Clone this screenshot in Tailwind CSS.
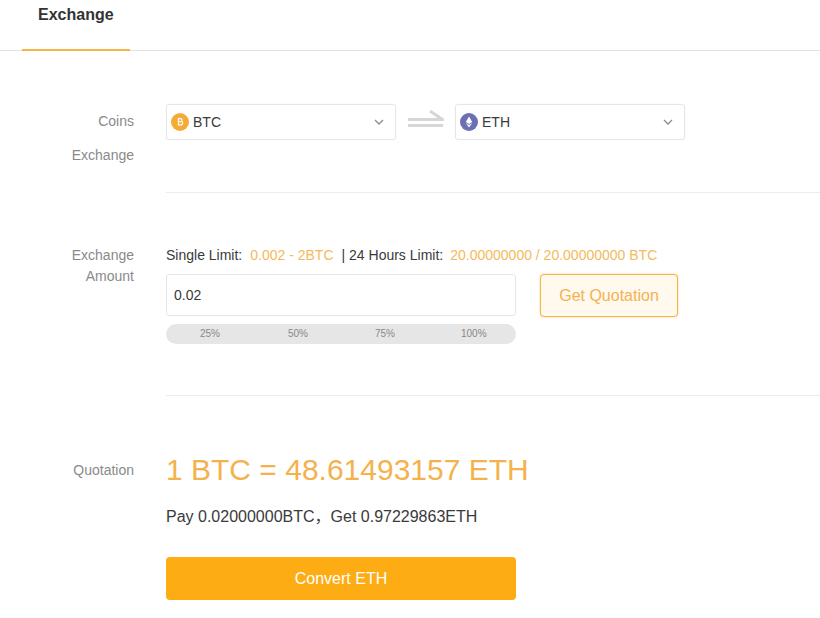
<!DOCTYPE html>
<html lang="en">
  <head>
    <meta charset="utf-8" />
    <meta name="viewport" content="width=device-width, initial-scale=1.0" />
    <title>Exchange</title>
    <script src="https://cdn.jsdelivr.net/npm/@tailwindcss/browser@4"></script>
  </head>
  <body class="w-[820px] h-[618px] overflow-hidden bg-white font-['Liberation_Sans','Noto_Sans_CJK_SC',Arial,sans-serif] text-[14px] text-[#3a3a3a]">
    <!-- tabs -->
    <div class="h-[51px] border-b border-[#e2e2e2] pl-[22px]">
      <div class="w-[108px] h-[51px] border-b-2 border-[#f5b544] pl-4 pt-[5px] text-[16px] leading-5 font-bold text-[#333]">Exchange</div>
    </div>

    <!-- coins -->
    <div class="flex pt-[53px]">
      <div class="w-[134px] shrink-0 text-right text-[#8a8a8a] leading-[34px]">
        <div>Coins</div>
        <div>Exchange</div>
      </div>
      <div class="ml-8 flex-1 h-[89px] border-b border-[#ececec]">
        <div class="flex items-center">
          <div class="w-[230px] h-9 flex items-center pl-[4px] pr-[10px] border border-[#e6e6e6] rounded-[3px] shadow-[0_0_2px_rgba(0,0,0,0.05)]">
            <svg class="w-[18px] h-[18px] shrink-0" viewBox="0 0 18 18">
              <circle cx="9" cy="9" r="9" fill="#f5ac37" />
              <path d="M7.400 5.600h2.200a1.500 1.500 0 0 1 .6 2.900 1.700 1.700 0 0 1-.4 3.400H7.400zM7.400 8.600h2.400" fill="none" stroke="#fff" stroke-width="1.100" />
            </svg>
            <span class="ml-[4px] flex-1">BTC</span>
            <svg class="w-[10px] h-[6px] mr-[1px]" viewBox="0 0 10 6"><path d="M1 1l4 4 4-4" fill="none" stroke="#8c8c8c" stroke-width="1.300" /></svg>
          </div>
          <svg class="w-[36px] h-[24px] ml-[12px] mr-[11px] shrink-0" viewBox="0 0 36 24">
            <path d="M0 9.500h34.500L22 1" fill="none" stroke="#d6d6d6" stroke-width="3" />
            <path d="M0 15.500h35" fill="none" stroke="#d6d6d6" stroke-width="3" />
          </svg>
          <div class="w-[230px] h-9 flex items-center pl-[4px] pr-[10px] border border-[#e6e6e6] rounded-[3px] shadow-[0_0_2px_rgba(0,0,0,0.05)]">
            <svg class="w-[18px] h-[18px] shrink-0" viewBox="0 0 18 18">
              <circle cx="9" cy="9" r="9" fill="#6b70b5" />
              <path d="M9 3.500L5.800 9 9 11l3.200-2zM5.800 10L9 14.500 12.200 10 9 12z" fill="#fff" />
            </svg>
            <span class="ml-[4px] flex-1">ETH</span>
            <svg class="w-[10px] h-[6px] mr-[1px]" viewBox="0 0 10 6"><path d="M1 1l4 4 4-4" fill="none" stroke="#8c8c8c" stroke-width="1.300" /></svg>
          </div>
        </div>
      </div>
    </div>

    <!-- amount -->
    <div class="flex pt-[52px]">
      <div class="w-[134px] shrink-0 text-right text-[#8a8a8a] leading-[21px]">
        <div>Exchange</div>
        <div>Amount</div>
      </div>
      <div class="ml-8 flex-1 h-[151px] border-b border-[#ececec]">
        <div class="leading-[21px] whitespace-nowrap">
          Single Limit:<span class="ml-2 text-[#f5b95c]">0.002 - 2BTC</span><span class="ml-2">| 24 Hours Limit:</span><span class="ml-[7px] text-[#f5b95c]">20.00000000 / 20.00000000 BTC</span>
        </div>
        <div class="flex mt-[8px]">
          <div class="w-[350px] h-[42px] pl-[7px] leading-[40px] border border-[#e6e6e6] rounded-[3px]">0.02</div>
          <button class="w-[138px] h-[43px] ml-6 text-[16px] text-[#f3b252] bg-[#fff9ee] border border-[#f5b544] rounded-[4px] shadow-[0_0_2px_rgba(245,181,68,0.7)]">Get Quotation</button>
        </div>
        <div class="relative w-[350px] h-5 mt-[7px] bg-[#e6e6e6] rounded-full text-[10px] leading-5 text-[#888]">
          <span class="absolute left-[34px]">25%</span>
          <span class="absolute left-[122px]">50%</span>
          <span class="absolute left-[209px]">75%</span>
          <span class="absolute left-[295px]">100%</span>
        </div>
      </div>
    </div>

    <!-- quotation -->
    <div class="flex pt-[56px]">
      <div class="w-[134px] shrink-0 text-right text-[#8a8a8a] pt-[8px] leading-5">Quotation</div>
      <div class="ml-8 flex-1">
        <div class="text-[30px] leading-9 text-[#f5b24c]">1 BTC = 48.61493157 ETH</div>
        <div class="mt-[17px] text-[16px] leading-6">Pay 0.02000000BTC，Get 0.97229863ETH</div>
        <button class="block w-[350px] h-[43px] mt-[28px] text-[16px] text-white bg-[#fdac14] rounded-[4px]">Convert ETH</button>
      </div>
    </div>
  </body>
</html>
